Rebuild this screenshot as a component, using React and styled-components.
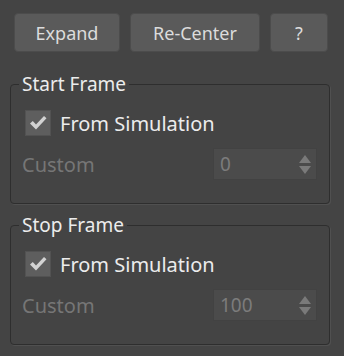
import React from 'react';
import styled, { createGlobalStyle } from 'styled-components';

const Global = createGlobalStyle`
  html, body {
    margin: 0;
    padding: 0;
    background: #444444;
  }
  body {
    font-family: "Noto Sans", "Open Sans", sans-serif;
    color: #e4e4e4;
  }
`;

const Panel = styled.div`
  width: 344px;
  height: 356px;
  box-sizing: border-box;
  padding: 13px 14px 0 10px;
  background: #444444;
`;

const Toolbar = styled.div`
  display: flex;
  gap: 10px;
  padding-left: 4px;
  margin-bottom: 21px;
`;

const Button = styled.button`
  width: ${p => p.w}px;
  height: 39px;
  box-sizing: border-box;
  border: 1px solid #4c4c4c;
  border-radius: 4px;
  background: #5a5a5a;
  color: #dcdcdc;
  font-family: "Noto Sans", sans-serif;
  font-size: 18px;
  padding: 0;
  cursor: pointer;
`;

const Group = styled.fieldset`
  margin: 0 0 ${p => p.gapAfter || 0}px 0;
  width: 320px;
  box-sizing: border-box;
  border: 1px solid #2e2e2e;
  border-radius: 4px;
  box-shadow: 1px 1px 0 #505050;
  padding: 15px 12px 23px 11px;
  min-width: 0;
`;

const Legend = styled.legend`
  padding: 0 3px;
  margin-left: -3px;
  font-size: 19px;
  line-height: 22px;
  color: #ececec;
`;

const CheckRow = styled.label`
  display: flex;
  align-items: center;
  gap: 9px;
  height: 26px;
  padding-left: 3px;
  font-size: 20px;
  color: #ececec;
  margin-bottom: 12px;
`;

const Box = styled.span`
  width: 26px;
  height: 26px;
  box-sizing: border-box;
  background: #5e5e5e;
  border: 1px solid #525252;
  display: flex;
  align-items: center;
  justify-content: center;
`;

const FieldRow = styled.div`
  display: flex;
  align-items: center;
  justify-content: space-between;
  height: 32px;
`;

const FieldLabel = styled.span`
  font-size: 20px;
  color: #767676;
`;

const Spinner = styled.div`
  width: 104px;
  height: 32px;
  box-sizing: border-box;
  border: 1px solid #424242;
  background: #4b4b4b;
  display: flex;
  align-items: center;
  padding: 0 5px 0 6px;
`;

const SpinValue = styled.span`
  flex: 1;
  font-size: 19px;
  color: #7c7c7c;
`;

const Arrows = styled.span`
  display: flex;
  flex-direction: column;
  gap: 3px;
`;

const Check = () => (
  <svg width="18" height="16" viewBox="0 0 18 16">
    <path d="M1 8.5 L3.8 6 L7 9.5 L15 1 L17.5 3.2 L7 14.5 Z" fill="#d2d2d2" />
  </svg>
);

const SpinArrows = () => (
  <Arrows>
    <svg width="12" height="8" viewBox="0 0 12 8">
      <path d="M6 0 L12 8 L0 8 Z" fill="#7a7a7a" />
    </svg>
    <svg width="12" height="8" viewBox="0 0 12 8">
      <path d="M0 0 L12 0 L6 8 Z" fill="#7a7a7a" />
    </svg>
  </Arrows>
);

const FrameGroup = ({ title, value, gapAfter }) => (
  <Group gapAfter={gapAfter}>
    <Legend>{title}</Legend>
    <CheckRow>
      <Box><Check /></Box>
      From Simulation
    </CheckRow>
    <FieldRow>
      <FieldLabel>Custom</FieldLabel>
      <Spinner>
        <SpinValue>{value}</SpinValue>
        <SpinArrows />
      </Spinner>
    </FieldRow>
  </Group>
);

export default function App() {
  return (
    <>
      <Global />
      <Panel>
        <Toolbar>
          <Button w={106}>Expand</Button>
          <Button w={130}>Re-Center</Button>
          <Button w={58}>?</Button>
        </Toolbar>
        <FrameGroup title="Start Frame" value="0" gapAfter={10} />
        <FrameGroup title="Stop Frame" value="100" />
      </Panel>
    </>
  );
}
